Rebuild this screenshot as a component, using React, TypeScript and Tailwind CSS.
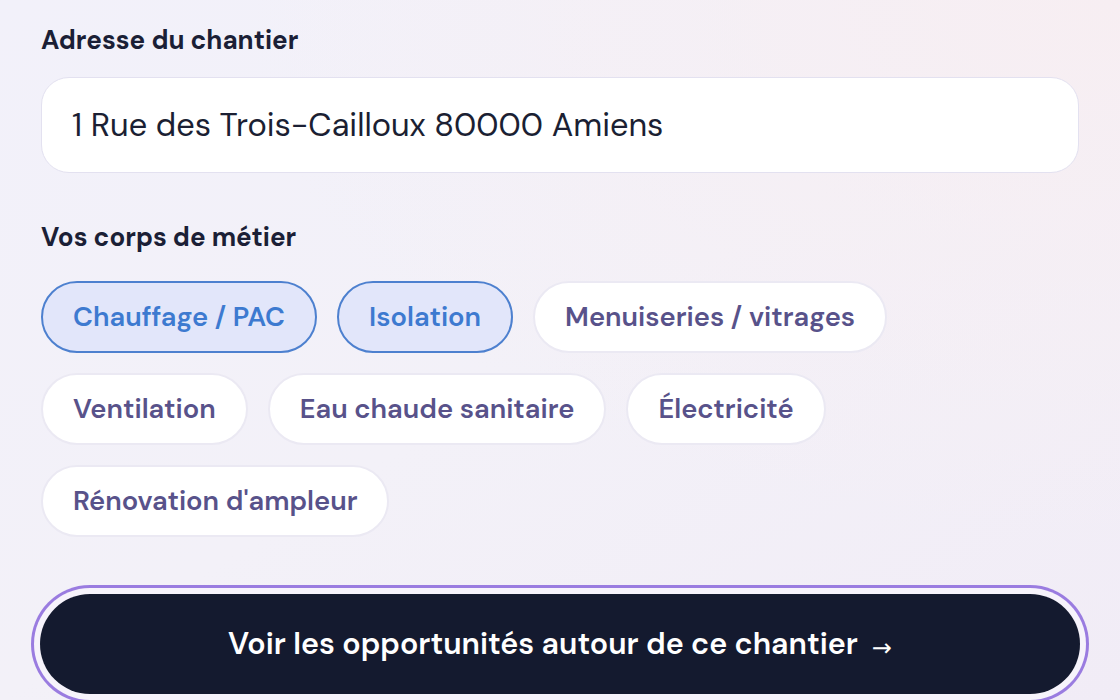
import React from "react";

const chips: { label: string; selected: boolean }[] = [
  { label: "Chauffage / PAC", selected: true },
  { label: "Isolation", selected: true },
  { label: "Menuiseries / vitrages", selected: false },
  { label: "Ventilation", selected: false },
  { label: "Eau chaude sanitaire", selected: false },
  { label: "Électricité", selected: false },
  { label: "Rénovation d'ampleur", selected: false },
];

export default function App() {
  return (
    <div
      className="w-[1120px] h-[700px] overflow-hidden bg-gradient-to-br from-[#f2f1fa] via-[#f3f1f8] to-[#f1ecf6]"
      style={{ fontFamily: '"DM Sans", Inter, "Noto Sans", sans-serif' }}
    >
      <div className="relative h-full">
        <div className="absolute inset-0 bg-[radial-gradient(ellipse_at_top_right,_#f7eef2_0%,_transparent_55%)]" />
        <div className="relative px-[41px] pt-[24px] flex flex-col">
          <label className="text-[26px] leading-[32px] font-bold text-[#1b1f36]">
            Adresse du chantier
          </label>
          <div className="mt-[21px] h-[96px] w-[1038px] rounded-[28px] bg-white border border-[#e3e1f0] flex items-center px-[30px]">
            <span className="text-[32.5px] text-[#1b1f33]">
              1 Rue des Trois-Cailloux 80000 Amiens
            </span>
          </div>
          <label className="mt-[48px] text-[26px] leading-[32px] font-bold text-[#1b1f36]">
            Vos corps de métier
          </label>
          <div className="mt-[28px] flex flex-wrap gap-[20px] w-[1040px]">
            {chips.map((c) =>
              c.selected ? (
                <div
                  key={c.label}
                  className="h-[72px] px-[30px] rounded-full border-2 border-[#4d80cf] bg-[#e2e6fa] flex items-center text-[27.3px] font-semibold text-[#3d7ad0]"
                >
                  {c.label}
                </div>
              ) : (
                <div
                  key={c.label}
                  className="h-[72px] px-[30px] rounded-full border-2 border-[#ebe9f3] bg-white flex items-center text-[27.3px] font-semibold text-[#58528a]"
                >
                  {c.label}
                </div>
              )
            )}
          </div>
          <div className="mt-[57px] ml-[-1px]">
            <button className="w-[1040px] h-[100px] rounded-full bg-[#141a2f] text-white text-[30.4px] font-semibold ring-[3px] ring-[#9a7ce0] ring-offset-[6px] ring-offset-[#f6f3fb] flex items-center justify-center">
              <span>Voir les opportunités autour de ce chantier</span>
              <span
                className="ml-[14px] mt-[8px] text-[24px] font-normal"
                style={{ fontFamily: '"DejaVu Sans", sans-serif' }}
              >
                →
              </span>
            </button>
          </div>
        </div>
      </div>
    </div>
  );
}
